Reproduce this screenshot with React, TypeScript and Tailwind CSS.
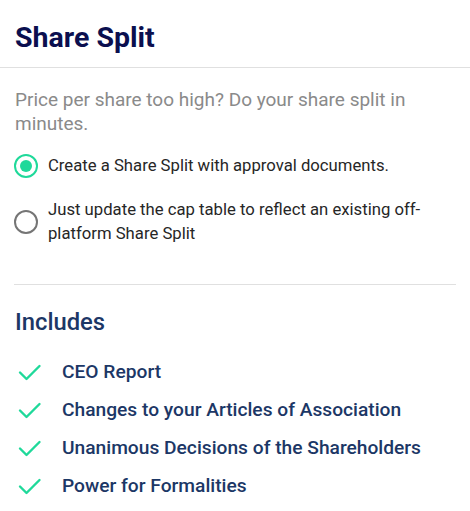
import React from "react";

const items = [
  "CEO Report",
  "Changes to your Articles of Association",
  "Unanimous Decisions of the Shareholders",
  "Power for Formalities",
];

function Check() {
  return (
    <svg width="24" height="24" viewBox="0 0 24 24" fill="none" stroke="#1fd99a" strokeWidth="2.4" strokeLinecap="round" strokeLinejoin="round">
      <path d="M2 12.5l6.5 6.5L21.5 6" />
    </svg>
  );
}

export default function App() {
  return (
    <div className="w-[470px] h-[511px] bg-white overflow-hidden" style={{ fontFamily: "Roboto, sans-serif" }}>
      <div className="border-b border-[#e0e0e0] px-[15px] pt-[21px] pb-[12px]">
        <h1 className="text-[28.5px] leading-[34px] font-bold text-[#0b0f4f]">Share Split</h1>
      </div>
      <div className="px-[14px]">
        <p className="mt-[20px] text-[19px] leading-[24px] text-[#8a8a8a] pl-[1px]">
          Price per share too high? Do your share split in minutes.
        </p>
        <div className="mt-[18px] flex flex-col gap-[20px]">
          <label className="flex items-center gap-[10px]">
            <span className="w-[24px] h-[24px] rounded-full border-2 border-[#1fd99a] flex items-center justify-center shrink-0">
              <span className="w-[12px] h-[12px] rounded-full bg-[#1fd99a]" />
            </span>
            <span className="text-[16.7px] leading-[24px] text-[#262626]">Create a Share Split with approval documents.</span>
          </label>
          <label className="flex items-center gap-[10px]">
            <span className="w-[24px] h-[24px] rounded-full border-2 border-[#757575] shrink-0" />
            <span className="text-[16.7px] leading-[24px] text-[#262626]">
              Just update the cap table to reflect an existing off-platform Share Split
            </span>
          </label>
        </div>
        <div className="mt-[38px] border-t border-[#e0e0e0]" />
        <h2 className="mt-[22px] text-[23.8px] leading-[30px] font-medium text-[#1c3766] pl-[1px]">Includes</h2>
        <ul className="mt-[23px] flex flex-col gap-[14px]">
          {items.map((t) => (
            <li key={t} className="flex items-center gap-[20px] pl-[4px]">
              <Check />
              <span className="text-[19.2px] leading-[24px] font-medium text-[#1c3766]">{t}</span>
            </li>
          ))}
        </ul>
      </div>
    </div>
  );
}
